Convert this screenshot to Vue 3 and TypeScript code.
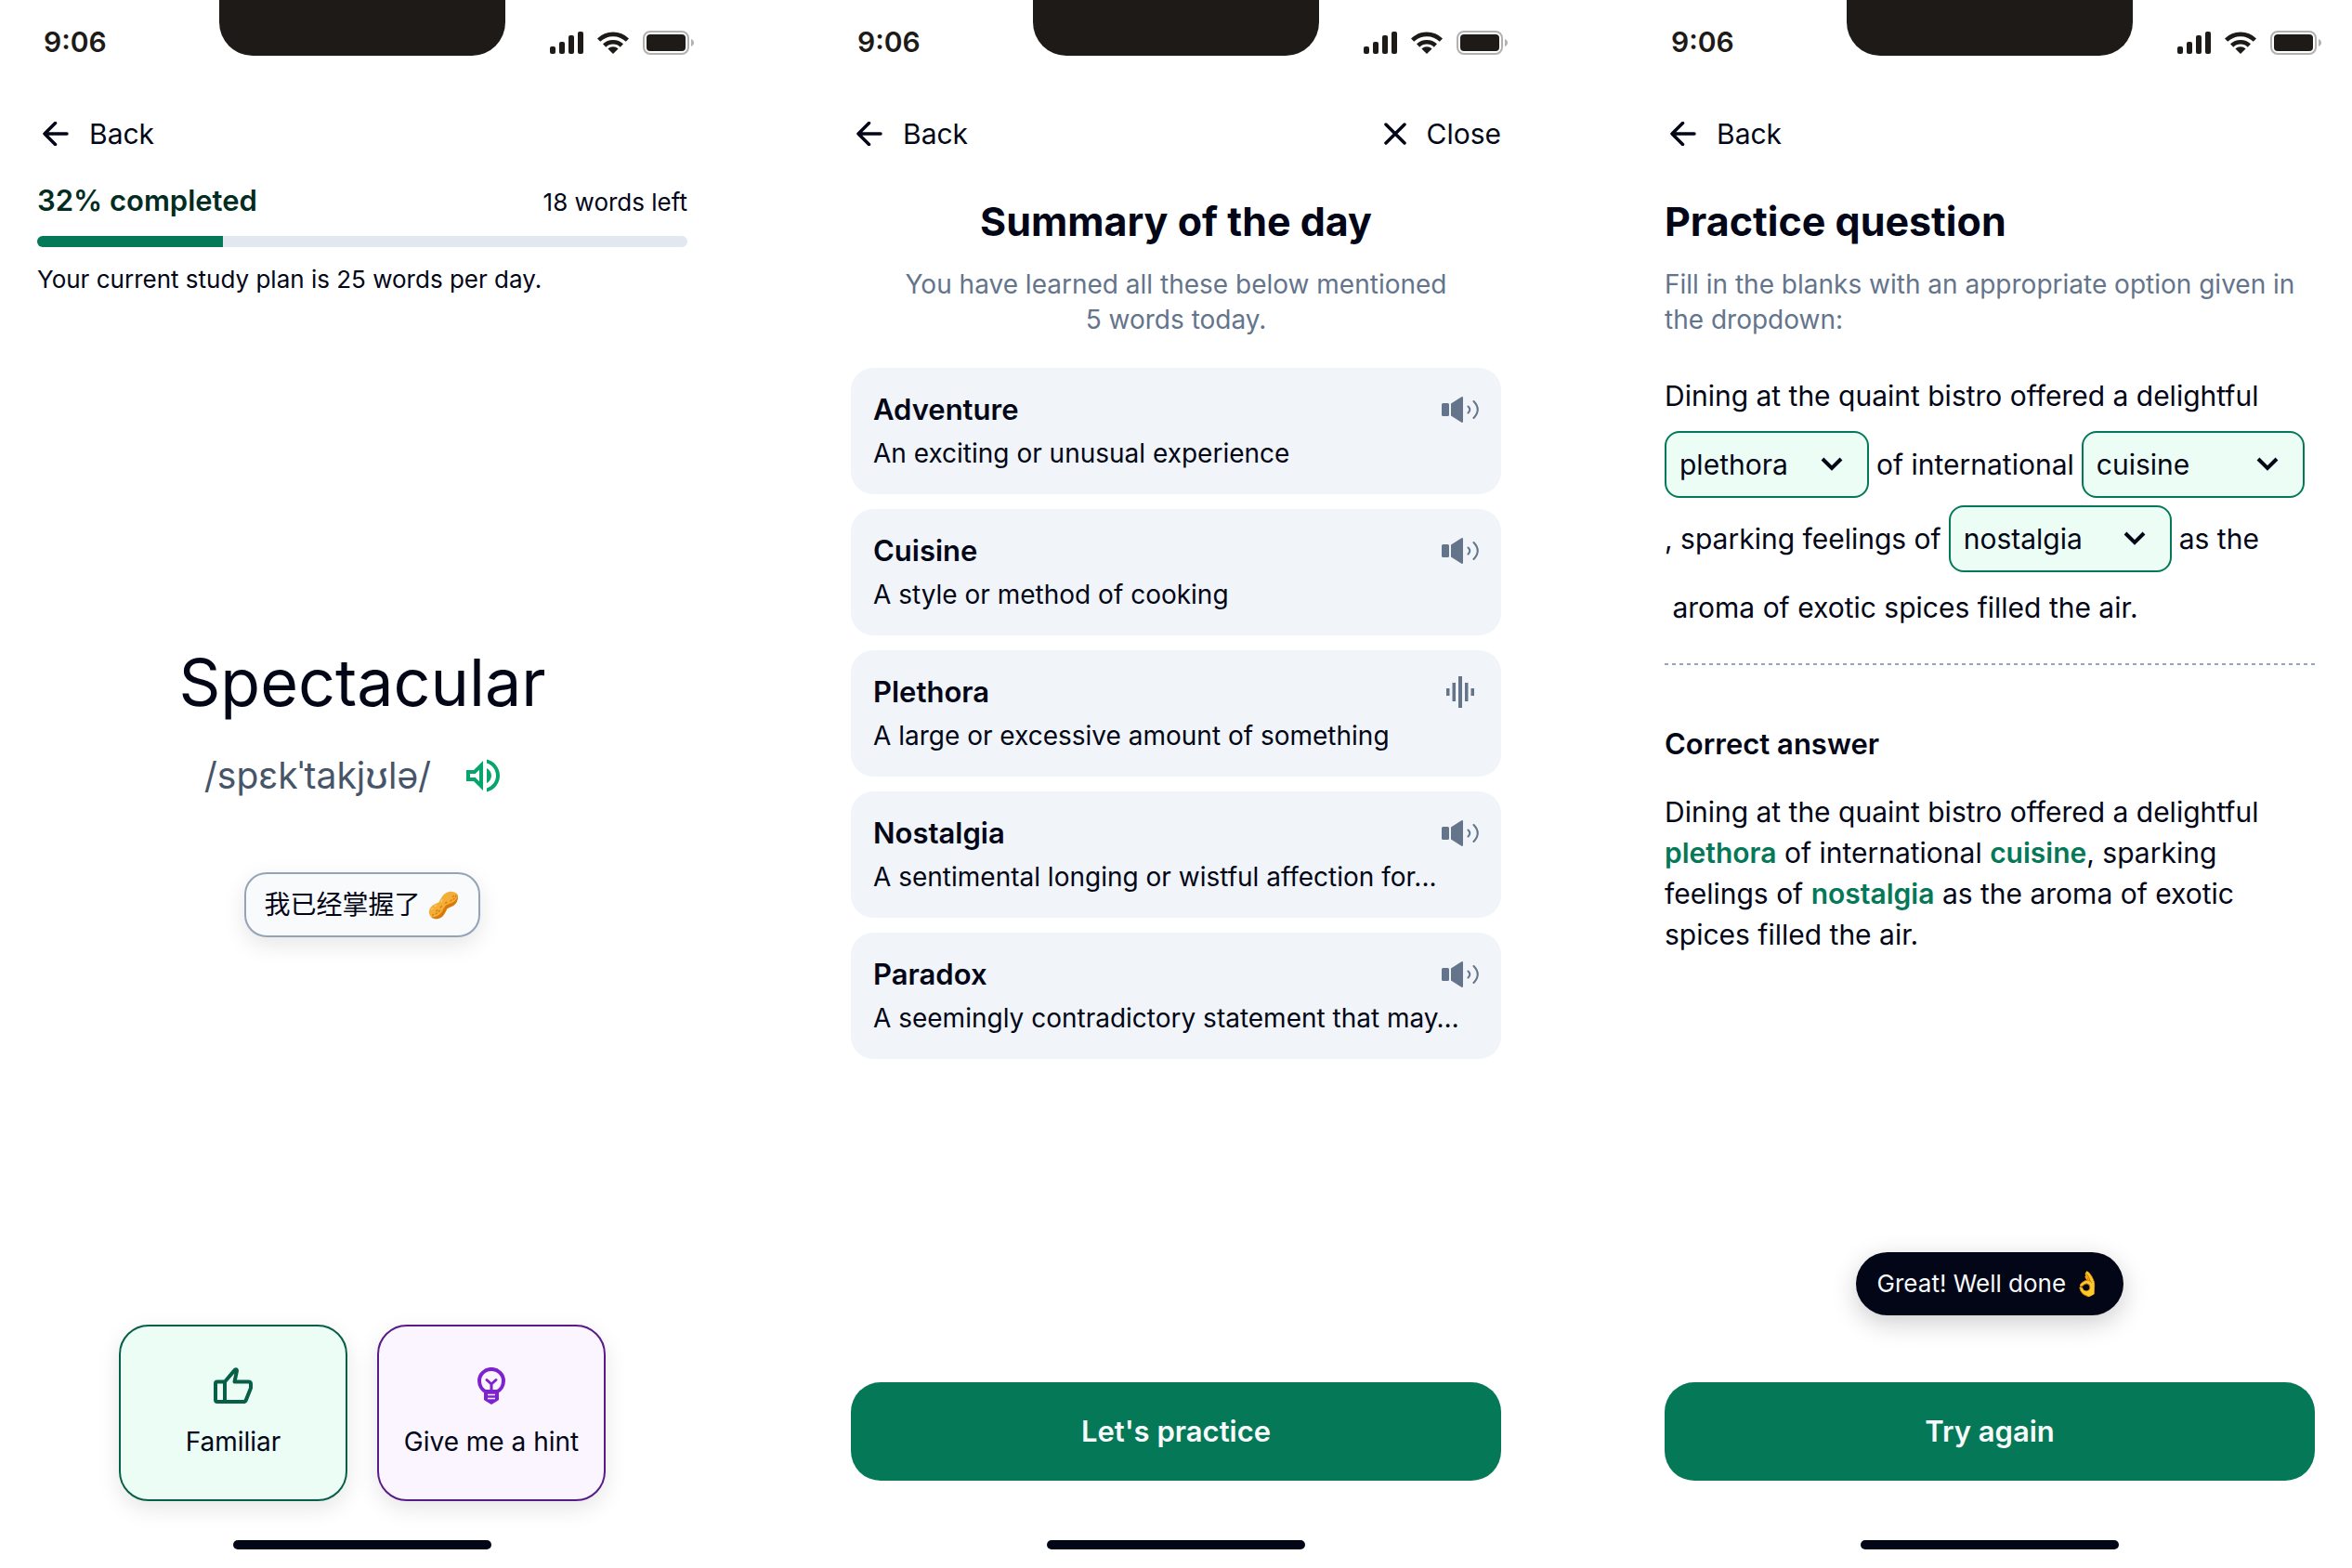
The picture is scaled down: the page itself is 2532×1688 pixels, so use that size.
<script setup lang="ts">
import { computed, ref } from 'vue'

interface Word {
  term: string
  meaning: string
  playing?: boolean
}

const completed = ref(32)
const wordsDone = ref(10)
const wordsInPlan = ref(35)
const progressWidth = computed(() => `${(wordsDone.value / wordsInPlan.value) * 100}%`)

const words: Word[] = [
  { term: 'Adventure', meaning: 'An exciting or unusual experience' },
  { term: 'Cuisine', meaning: 'A style or method of cooking' },
  { term: 'Plethora', meaning: 'A large or excessive amount of something', playing: true },
  { term: 'Nostalgia', meaning: 'A sentimental longing or wistful affection for...' },
  { term: 'Paradox', meaning: 'A seemingly contradictory statement that may…' },
]

const options = ['plethora', 'cuisine', 'nostalgia']
const blanks = ref(['plethora', 'cuisine', 'nostalgia'])
const screens = ['study', 'summary', 'practice'] as const
</script>

<template>
  <div class="board">
    <section v-for="screen in screens" :key="screen" class="phone">
      <header class="status">
        <span class="time">9:06</span>
        <span class="notch"></span>
        <span class="indicators">
          <svg width="36" height="24" viewBox="0 0 36 24" fill="#1d1a17" aria-hidden="true">
            <rect x="0" y="16" width="6" height="8" rx="2" />
            <rect x="10" y="11" width="6" height="13" rx="2" />
            <rect x="20" y="4" width="6" height="20" rx="2" />
            <rect x="30" y="0" width="6" height="24" rx="2" />
          </svg>
          <svg width="34" height="24" viewBox="0 0 34 24" aria-hidden="true">
            <g fill="none" stroke="#1d1a17" stroke-width="4.6">
              <path d="M1.6 9.2a22 22 0 0 1 30.8 0" />
              <path d="M7.6 15a13.5 13.5 0 0 1 18.8 0" />
            </g>
            <path d="M11.4 18.4a8.2 8.2 0 0 1 11.2 0L17 24z" fill="#1d1a17" />
          </svg>
          <svg width="55" height="26" viewBox="0 0 55 26" aria-hidden="true">
            <rect x="1" y="1" width="48" height="24" rx="7" fill="none" stroke="#b3b0b1" stroke-width="2" />
            <rect x="4" y="4" width="42" height="18" rx="4" fill="#1d1a17" />
            <path d="M52 9c4 1.500 4 6.500 0 8z" fill="#b3b0b1" />
          </svg>
        </span>
      </header>

      <nav class="nav">
        <a href="#back" class="nav-link">
          <svg width="28" height="26" viewBox="0 0 28 26" class="line-icon" aria-hidden="true">
            <path d="M26 13H2M13.500 1.500L2 13l11.500 11.500" />
          </svg>
          Back
        </a>
        <a v-if="screen === 'summary'" href="#close" class="nav-link">
          <svg width="24" height="24" viewBox="0 0 24 24" class="line-icon" aria-hidden="true">
            <path d="M2 2l20 20M22 2L2 22" />
          </svg>
          Close
        </a>
      </nav>

      <template v-if="screen === 'study'">
        <div class="progress-head">
          <h2 class="progress-title">{{ completed }}% completed</h2>
          <span class="small">18 words left</span>
        </div>
        <div class="track" role="progressbar" :aria-valuenow="completed" aria-valuemin="0" aria-valuemax="100">
          <div class="fill" :style="{ width: progressWidth }"></div>
        </div>
        <p class="small plan">Your current study plan is 25 words per day.</p>

        <main class="word">
          <h1 class="term">Spectacular</h1>
          <div class="phonetic-row">
            <span class="phonetic">/spɛkˈtakjʊlə/</span>
            <button type="button" class="speak" aria-label="Play pronunciation">
              <svg width="48" height="48" viewBox="0 0 24 24" fill="#05a56c" aria-hidden="true">
                <path d="M3 9v6h4l5 5V4L7 9H3zm7-.17v6.340L7.830 13H5v-2h2.830L10 8.830zM16.500 12c0-1.770-1.020-3.290-2.500-4.030v8.050c1.480-.73 2.500-2.250 2.500-4.020zM14 3.230v2.060c2.890.86 5 3.540 5 6.710s-2.110 5.850-5 6.710v2.060c4.010-.91 7-4.490 7-8.770s-2.990-7.860-7-8.770z" />
              </svg>
            </button>
          </div>
          <button type="button" class="mastered">我已经掌握了 🥜</button>
        </main>

        <div class="choices">
          <button type="button" class="choice familiar">
            <svg width="42" height="40" viewBox="0 0 42 40" fill="none" stroke="#065f46" stroke-width="4" stroke-linejoin="round" aria-hidden="true">
              <path d="M12 15.500H4a2 2 0 0 0-2 2V35a2 2 0 0 0 2 2h29l1.500-1 5.200-13q.3-.8.3-1.600V18q0-2.500-2.500-2.500H22.500L25 3.600Q24.600 1.600 23 2.600L12 15.500V37" />
            </svg>
            Familiar
          </button>
          <button type="button" class="choice hint">
            <svg width="30" height="40" viewBox="0 0 30 40" fill="none" stroke="#7e22ce" aria-hidden="true">
              <path d="M9.500 26.500C5 24.500 2 19.500 2 14.500a13 12.600 0 0 1 26 0c0 5-3 10-7.500 12" stroke-width="4" />
              <path d="M10 13.500l5 4.500 5-4.500M15 18v7" stroke-width="3" stroke-linecap="round" stroke-linejoin="round" />
              <path d="M7 24h16v11l-3 2-5 3-5-3-3-2z" fill="#7e22ce" stroke="none" />
              <path d="M11 29.500h8M11 33.500h8" stroke="#faf5ff" stroke-width="1.600" />
            </svg>
            Give me a hint
          </button>
        </div>
      </template>

      <template v-else-if="screen === 'summary'">
        <h1 class="title centered">Summary of the day</h1>
        <p class="lead centered">You have learned all these below mentioned<br />5 words today.</p>
        <ul class="cards">
          <li v-for="word in words" :key="word.term" class="card">
            <div class="card-head">
              <h2 class="card-title">{{ word.term }}</h2>
              <button type="button" class="sound" :aria-label="`Play ${word.term}`">
                <svg v-if="word.playing" width="30" height="34" viewBox="0 0 30 34" fill="#64748b" aria-hidden="true">
                  <rect x="0" y="13" width="3.500" height="8" />
                  <rect x="6.500" y="7" width="3.500" height="20" />
                  <rect x="13" y="0" width="4" height="34" />
                  <rect x="20" y="7" width="3.500" height="20" />
                  <rect x="26.500" y="13" width="3.500" height="8" />
                </svg>
                <svg v-else width="40" height="28" viewBox="0 0 40 28" fill="#64748b" aria-hidden="true">
                  <rect x="0" y="7" width="8" height="14" rx="1.500" />
                  <path d="M10 7.500L21.400.2Q23-.4 23 1.200v25.600q0 1.600-1.600 1L10 20.500z" />
                  <path d="M28.500 10.500q3.600 3.500 0 7M34.500 5q8.500 9 0 18" fill="none" stroke="#64748b" stroke-width="2" stroke-linecap="round" />
                </svg>
              </button>
            </div>
            <p class="meaning">{{ word.meaning }}</p>
          </li>
        </ul>
        <button type="button" class="primary bottom">Let's practice</button>
      </template>

      <template v-else>
        <h1 class="title">Practice question</h1>
        <p class="lead">Fill in the blanks with an appropriate option given in the dropdown:</p>
        <div class="sentence">
          <span class="piece">Dining at the quaint bistro offered a delightful</span>
          <span class="blank narrow">
            <select v-model="blanks[0]" aria-label="First blank">
              <option v-for="option in options" :key="option">{{ option }}</option>
            </select>
            <svg class="chevron" width="24" height="16" viewBox="0 0 24 16" aria-hidden="true"><path d="M2 2l10 10L22 2" /></svg>
          </span>
          <span class="piece">of international</span>
          <span class="blank">
            <select v-model="blanks[1]" aria-label="Second blank">
              <option v-for="option in options" :key="option">{{ option }}</option>
            </select>
            <svg class="chevron" width="24" height="16" viewBox="0 0 24 16" aria-hidden="true"><path d="M2 2l10 10L22 2" /></svg>
          </span>
          <span class="piece">, sparking feelings of</span>
          <span class="blank">
            <select v-model="blanks[2]" aria-label="Third blank">
              <option v-for="option in options" :key="option">{{ option }}</option>
            </select>
            <svg class="chevron" width="24" height="16" viewBox="0 0 24 16" aria-hidden="true"><path d="M2 2l10 10L22 2" /></svg>
          </span>
          <span class="piece">as the</span>
          <span class="piece">&nbsp;aroma of exotic spices filled the air.</span>
        </div>
        <hr class="divider" />
        <h2 class="answer-title">Correct answer</h2>
        <p class="answer">
          Dining at the quaint bistro offered a delightful <b>plethora</b> of international <b>cuisine</b>, sparking feelings of <b>nostalgia</b> as the aroma of exotic spices filled the air.
        </p>
        <div class="toast bottom" role="status">Great! Well done 👌</div>
        <button type="button" class="primary">Try again</button>
      </template>

      <span class="home-bar"></span>
    </section>
  </div>
</template>

<style>
body {
  margin: 0;
  background: #ffffff;
}
</style>

<style scoped>
.board {
  display: grid;
  grid-template-columns: repeat(3, minmax(0, 1fr));
  gap: 96px;
  min-height: 100vh;
  font-family: Inter, "Noto Sans CJK SC", sans-serif;
  font-size: 30px;
  line-height: 44px;
  color: #020617;
}
.board * {
  box-sizing: border-box;
}
h1,
h2,
p,
ul {
  margin: 0;
  padding: 0;
}
button,
select {
  font: inherit;
  color: inherit;
  cursor: pointer;
}
.phone {
  display: flex;
  flex-direction: column;
  padding: 0 40px 20px;
}
.status {
  display: grid;
  grid-template-columns: 1fr 308px 1fr;
  height: 112px;
}
.time {
  padding: 23px 0 0 7px;
  font-weight: 600;
  color: #1d1a17;
}
.notch {
  height: 60px;
  background: #1d1a17;
  border-radius: 0 0 36px 36px;
}
.indicators {
  display: flex;
  align-items: center;
  justify-content: flex-end;
  gap: 15px;
  height: 92px;
  margin-right: -7px;
}
.nav {
  display: flex;
  justify-content: space-between;
  align-items: center;
  height: 64px;
}
.nav-link {
  display: flex;
  align-items: center;
  gap: 22px;
  padding-left: 6px;
  color: inherit;
  text-decoration: none;
}
.line-icon {
  fill: none;
  stroke: #020617;
  stroke-width: 3.5;
  stroke-linecap: round;
  stroke-linejoin: round;
}
.progress-head {
  display: flex;
  justify-content: space-between;
  align-items: baseline;
  margin-top: 18px;
  height: 44px;
}
.progress-title {
  font-size: 31px;
  font-weight: 600;
  color: #022c22;
}
.small {
  font-size: 26px;
  line-height: 38px;
}
.track {
  height: 12px;
  margin-top: 16px;
  border-radius: 6px;
  background: #e2e8f0;
  overflow: hidden;
}
.fill {
  height: 100%;
  background: #047857;
}
.plan {
  margin-top: 16px;
}
.word {
  flex: 1;
  display: flex;
  flex-direction: column;
  align-items: center;
  justify-content: center;
  padding-bottom: 50px;
}
.term {
  font-size: 70px;
  line-height: 96px;
  font-weight: 400;
}
.phonetic-row {
  display: flex;
  align-items: center;
  gap: 16px;
  margin-top: 12px;
}
.phonetic {
  font-size: 39px;
  color: #475569;
}
.speak {
  display: flex;
  padding: 16px;
  border: 0;
  background: none;
}
.mastered {
  height: 70px;
  margin-top: 64px;
  padding: 0 20px;
  border: 2px solid #94a3b8;
  border-radius: 24px;
  background: #f8fafc;
  box-shadow: 0 8px 24px rgb(0 0 0 / 10%);
  font-size: 28px;
}
.choices {
  display: flex;
  justify-content: center;
  gap: 32px;
  margin-bottom: 42px;
}
.choice {
  display: flex;
  flex-direction: column;
  align-items: center;
  justify-content: center;
  gap: 18px;
  width: 246px;
  height: 190px;
  padding: 4px 0 0;
  border: 2px solid;
  border-radius: 32px;
  box-shadow: 0 8px 24px rgb(0 0 0 / 10%);
  font-size: 28px;
}
.familiar {
  border-color: #065f46;
  background: #ecfdf5;
}
.hint {
  border-color: #581c87;
  background: #faf5ff;
}
.title {
  margin-top: 36px;
  font-size: 43px;
  line-height: 52px;
  font-weight: 700;
}
.lead {
  margin: 23px 0 33px;
  font-size: 28px;
  line-height: 38px;
  color: #64748b;
}
.centered {
  text-align: center;
}
.cards {
  display: flex;
  flex-direction: column;
  gap: 16px;
  list-style: none;
}
.card {
  padding: 24px;
  border-radius: 24px;
  background: #f1f5f9;
}
.card-head {
  display: flex;
  justify-content: space-between;
  align-items: center;
  height: 42px;
}
.card-title,
.answer-title {
  font-size: 31px;
  font-weight: 600;
}
.sound {
  display: flex;
  justify-content: center;
  width: 40px;
  padding: 0;
  border: 0;
  background: none;
}
.meaning {
  margin-top: 6px;
  font-size: 28px;
  line-height: 40px;
  white-space: nowrap;
}
.bottom {
  margin-top: auto;
}
.primary {
  height: 106px;
  margin-bottom: 64px;
  border: 0;
  border-radius: 32px;
  background: #047857;
  color: #f8fafc;
  font-size: 31px;
  font-weight: 600;
}
.sentence {
  display: flex;
  flex-wrap: wrap;
  align-items: center;
  gap: 8px;
}
.piece {
  padding: 8px 0;
}
.blank {
  position: relative;
  width: 240px;
}
.narrow {
  width: 220px;
}
.blank select {
  appearance: none;
  display: block;
  width: 100%;
  height: 72px;
  padding: 0 56px 0 14px;
  border: 2px solid #047857;
  border-radius: 16px;
  background: #ecfdf5;
}
.chevron {
  position: absolute;
  right: 28px;
  top: 28px;
  fill: none;
  stroke: #020617;
  stroke-width: 4;
  pointer-events: none;
}
.divider {
  width: 100%;
  height: 2px;
  margin: 30px 0 63px;
  border: 0;
  background: repeating-linear-gradient(90deg, #94a3b8 0 4px, transparent 4px 8px);
}
.answer-title {
  margin-bottom: 29px;
}
.answer b {
  font-weight: 600;
  color: #047857;
}
.toast {
  align-self: center;
  display: flex;
  align-items: center;
  height: 68px;
  margin-bottom: 72px;
  padding: 0 23px;
  border-radius: 34px;
  background: #020617;
  color: #f8fafc;
  font-size: 26px;
  box-shadow: 0 8px 28px rgb(0 0 0 / 20%);
}
.home-bar {
  align-self: center;
  width: 278px;
  height: 10px;
  border-radius: 5px;
  background: #020617;
}
</style>
